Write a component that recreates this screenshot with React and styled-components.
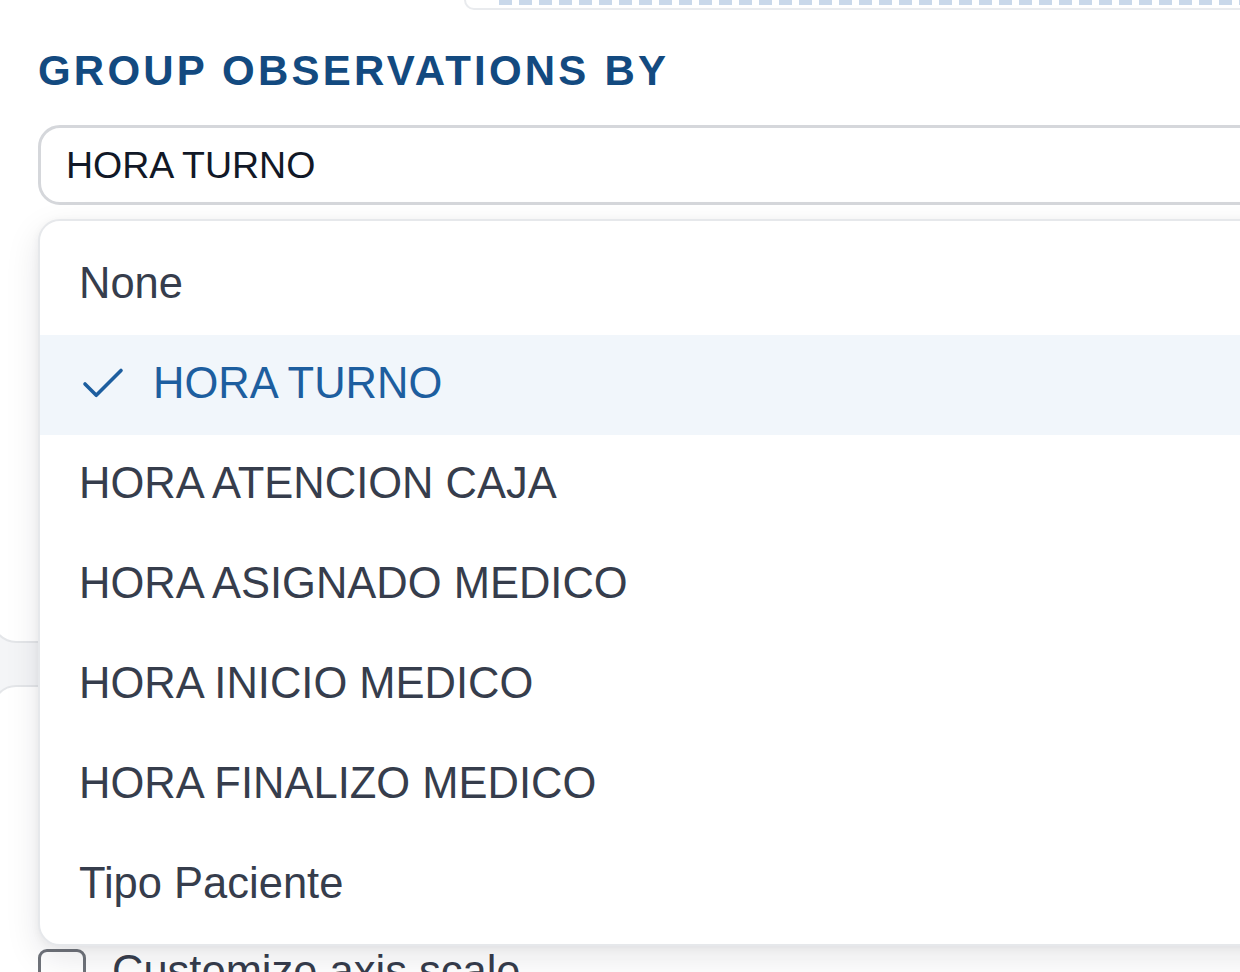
import React from "react";
import styled, { createGlobalStyle } from "styled-components";
import { Check } from "lucide-react";

const GlobalStyle = createGlobalStyle`
  html, body {
    margin: 0;
    padding: 0;
    background: #f4f5f7;
    overflow: hidden;
    font-family: "Liberation Sans", Helvetica, Arial, sans-serif;
  }
  * { box-sizing: border-box; }
`;

const Page = styled.div`
  width: 1240px;
  height: 972px;
  overflow: hidden;
  display: flex;
  flex-direction: column;
  gap: 42px;
`;

const Card = styled.section`
  background: #fff;
  border: 2px solid #e4e6e9;
  border-radius: ${(p) => (p.$top ? "0 0 24px 24px" : "24px")};
  ${(p) => p.$top && "border-top: none;"}
  margin-left: -8px;
  margin-right: -60px;
  padding-left: 44px;
  height: ${(p) => p.$height || "auto"};
  padding-top: ${(p) => p.$padTop || "0"};
  flex-shrink: 0;
`;

const DropArea = styled.div`
  margin-left: 426px;
  height: 10px;
  border-left: 2px solid #e9ebee;
  border-bottom: 2px solid #e9ebee;
  border-bottom-left-radius: 30px;
  padding-left: 33px;
`;

const Dashes = styled.div`
  height: 5px;
  background-image: repeating-linear-gradient(
    90deg,
    #c9d8ea 0 13px,
    transparent 13px 20px
  );
`;

const Title = styled.h2`
  margin: 36px 0 29px;
  font-size: 42px;
  line-height: 50px;
  font-weight: 700;
  letter-spacing: 3.2px;
  color: #134a80;
  text-transform: uppercase;
`;

const SelectWrap = styled.div`
  position: relative;
`;

const SelectBox = styled.div`
  height: 80px;
  border: 3px solid #d5d7db;
  border-radius: 22px;
  display: flex;
  align-items: center;
  padding-left: 25px;
  font-size: 37.5px;
  color: #111827;
  background: #fff;
`;

const Menu = styled.ul`
  position: absolute;
  top: calc(100% + 14px);
  left: 0;
  right: 0;
  margin: 0;
  list-style: none;
  padding: 14px 0 9px;
  background: #fff;
  border: 2px solid #e6e8eb;
  border-radius: 22px;
  box-shadow: 0 12px 34px rgba(15, 23, 42, 0.1), 0 2px 8px rgba(15, 23, 42, 0.05);
  z-index: 10;
`;

const Option = styled.li`
  height: 100px;
  display: flex;
  align-items: center;
  gap: 23px;
  padding-left: ${(p) => (p.$selected ? "36px" : "39px")};
  padding-bottom: 3px;
  font-size: 43.5px;
  color: ${(p) => (p.$selected ? "#1d5e9f" : "#363d4c")};
  background: ${(p) => (p.$selected ? "#f1f6fb" : "transparent")};
`;

const CheckRow = styled.label`
  display: flex;
  align-items: flex-start;
  gap: 26px;
  font-size: 43.5px;
  color: #363d4c;
  line-height: 1;
`;

const Box = styled.span`
  width: 48px;
  height: 48px;
  border: 3px solid #6f737a;
  border-radius: 9px;
  flex-shrink: 0;
`;

const CheckText = styled.span`
  margin-top: 1px;
`;

const options = [
  "None",
  "HORA TURNO",
  "HORA ATENCION CAJA",
  "HORA ASIGNADO MEDICO",
  "HORA INICIO MEDICO",
  "HORA FINALIZO MEDICO",
  "Tipo Paciente",
];

export default function App() {
  const selected = "HORA TURNO";
  return (
    <>
      <GlobalStyle />
      <Page>
        <Card $top $height="643px">
          <DropArea>
            <Dashes />
          </DropArea>
          <Title>Group observations by</Title>
          <SelectWrap>
            <SelectBox>{selected}</SelectBox>
            <Menu>
              {options.map((o) => (
                <Option key={o} $selected={o === selected}>
                  {o === selected && (
                    <Check size={54} strokeWidth={1.6} color="#1d5e9f" />
                  )}
                  {o}
                </Option>
              ))}
            </Menu>
          </SelectWrap>
        </Card>
        <Card $padTop="262px">
          <CheckRow>
            <Box />
            <CheckText>Customize axis scale</CheckText>
          </CheckRow>
        </Card>
      </Page>
    </>
  );
}
